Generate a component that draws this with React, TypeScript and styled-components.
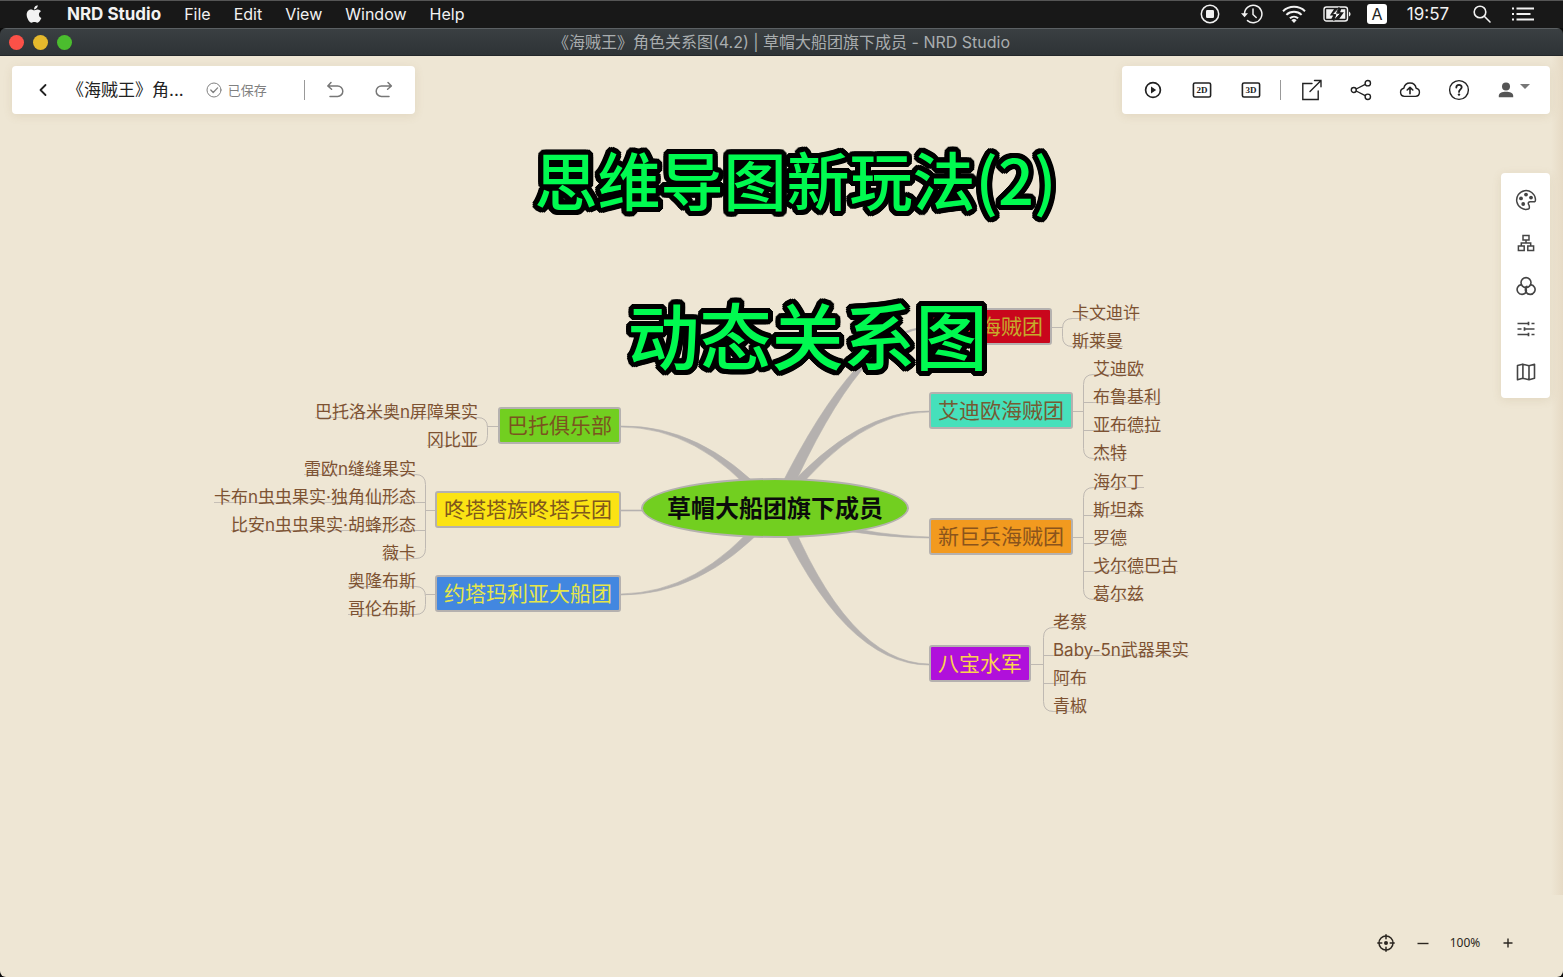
import React from "react";
import styled, { createGlobalStyle } from "styled-components";
import { FaApple } from "react-icons/fa";

const LINE = "#b5b1af";
const UI_FONT = `Inter, "Noto Sans CJK SC", sans-serif`;

const GlobalStyle = createGlobalStyle`
  *, *::before, *::after { box-sizing: border-box; }
  html { background: #fff; }
  body { margin: 0; font-family: ${UI_FONT}; }
  button { border: 0; padding: 0; background: none; font: inherit; color: inherit; cursor: pointer; }
  svg { display: block; }
`;

const Desktop = styled.div`
  display: flex;
  flex-direction: column;
  min-height: calc(100vh - 2px);
  margin: 0 2px 2px 0;
  background: #0c0c0c;
`;

/* ---------- system menu bar ---------- */

const MenuBar = styled.header`
  display: flex;
  align-items: center;
  justify-content: space-between;
  height: 28px;
  padding: 0 28px 2px 24px;
  border-top: 1px solid #555;
  background: #181818;
  color: #f2f2f2;
  font-size: 16px;
  line-height: 20px;
`;

const MenuGroup = styled.nav`
  display: flex;
  align-items: center;
  gap: 23px;
`;

const MenuItem = styled.button<{ $strong?: boolean }>`
  font-size: ${(p) => (p.$strong ? 17 : 16)}px;
  font-weight: ${(p) => (p.$strong ? 700 : 400)};
  white-space: nowrap;
`;

const StatusGroup = styled.div`
  display: flex;
  align-items: center;
  gap: 16px;
`;

const StatusItem = styled.div<{ $width: number }>`
  display: flex;
  justify-content: center;
  width: ${(p) => p.$width}px;
`;

const Clock = styled(StatusItem)`
  font-size: 17px;
`;

const InputBadge = styled.span`
  width: 20px;
  height: 20px;
  border-radius: 3px;
  background: #fff;
  color: #222;
  font-size: 16px;
  text-align: center;
`;

/* ---------- application window ---------- */

const Window = styled.div`
  display: flex;
  flex: 1;
  flex-direction: column;
  overflow: hidden;
  border-radius: 6px;
`;

const TitleBar = styled.div`
  display: grid;
  grid-template-columns: 1fr auto 1fr;
  align-items: center;
  height: 28px;
  padding: 0 9px;
  border-top: 1px solid #5b6063;
  border-bottom: 1px solid #23272a;
  background: linear-gradient(#3a3f42, #2e3336);
`;

const Lights = styled.div`
  display: flex;
  gap: 9px;
`;

const Light = styled.button<{ $color: string }>`
  width: 15px;
  height: 15px;
  border-radius: 50%;
  background: ${(p) => p.$color};
`;

const WindowTitle = styled.div`
  color: #a9adaf;
  font-size: 16px;
  line-height: 24px;
  white-space: nowrap;
`;

const Stage = styled.main`
  display: grid;
  flex: 1;
  grid-template: minmax(0, 1fr) / minmax(0, 1fr);
  background: #eee6d4;

  > * { grid-area: 1 / 1; }
`;

const Panel = styled.div`
  display: flex;
  border-radius: 4px;
  background: #fff;
  box-shadow: 0 2px 10px rgba(150, 120, 70, 0.14);
`;

const TopBars = styled.div`
  display: flex;
  align-items: flex-start;
  align-self: start;
  justify-content: space-between;
  padding: 10px 13px 0 12px;
`;

const Toolbar = styled(Panel)<{ $end?: number }>`
  align-items: center;
  height: 48px;
  padding: 0 ${(p) => p.$end ?? 0}px 0 6px;
`;

const ToolButton = styled.button<{ $tone?: string; $height?: number }>`
  display: flex;
  align-items: center;
  justify-content: center;
  width: 49px;
  height: ${(p) => p.$height ?? 48}px;
  color: ${(p) => p.$tone ?? "#222"};
`;

const UserButton = styled.button`
  display: flex;
  align-items: center;
  gap: 6px;
  height: 48px;
  padding: 0 20px 0 15px;
  color: #555;
`;

const Divider = styled.span`
  width: 1px;
  height: 20px;
  margin: 0 6px 0 5px;
  background: #999;
`;

const DocTitle = styled.div`
  color: #222;
  font-size: 17px;
  line-height: 24px;
  white-space: nowrap;
`;

const SaveState = styled.div`
  display: flex;
  align-items: center;
  gap: 6px;
  margin: 0 32px 0 22px;
  color: #808080;
  font-size: 13px;
  line-height: 20px;
  white-space: nowrap;
`;

const SideRail = styled(Panel)`
  flex-direction: column;
  align-self: start;
  justify-self: end;
  margin: 117px 13px 0 0;
  padding: 5px 0;
`;

const DrawerEdge = styled.div`
  justify-self: end;
  width: 12px;
  margin-bottom: 82px;
  background: linear-gradient(90deg, rgba(205, 180, 150, 0), rgba(205, 180, 150, 0.24));
`;

const ZoomBar = styled.div`
  display: flex;
  align-items: center;
  align-self: end;
  justify-self: end;
  margin: 0 37px 22px 0;
  color: #2b2620;
  font-family: "Noto Sans", sans-serif;
  font-size: 12px;
  line-height: 24px;
`;

const ZoomButton = styled.button`
  display: flex;
  align-items: center;
  justify-content: center;
  width: 37px;
  height: 24px;
`;

const ZoomValue = styled.output`
  width: 48px;
  text-align: center;
`;

/* ---------- mind map ---------- */

const MapPlane = styled.div`
  position: relative;
  place-self: center;
  width: 1201px;
  height: 721px;
`;

const Links = styled.svg`
  position: absolute;
  inset: 0;
`;

const RootNode = styled.div`
  position: absolute;
  left: 460px;
  top: 322px;
  display: flex;
  align-items: center;
  justify-content: center;
  width: 268px;
  height: 60px;
  padding-bottom: 4px;
  border: 2px solid ${LINE};
  border-radius: 50%;
  background: #72cf20;
  color: #0b0b0b;
  font-size: 24px;
  font-weight: 700;
  white-space: nowrap;
`;

type Side = "left" | "right";

const BranchNode = styled.div<{ $side: Side; $x: number; $y: number; $fill: string; $ink: string }>`
  position: absolute;
  ${(p) => (p.$side === "right" ? "left" : "right")}: ${(p) => p.$x}px;
  top: ${(p) => p.$y - 19}px;
  padding: 0 7px;
  border: 2px solid ${LINE};
  border-radius: 3px;
  background: ${(p) => p.$fill};
  color: ${(p) => p.$ink};
  font-size: 21px;
  line-height: 33px;
  white-space: nowrap;
`;

const LeafList = styled.ul<{ $side: Side; $x: number; $y: number }>`
  position: absolute;
  ${(p) => (p.$side === "right" ? "left" : "right")}: ${(p) => p.$x}px;
  top: ${(p) => p.$y - 20}px;
  display: flex;
  flex-direction: column;
  align-items: ${(p) => (p.$side === "right" ? "flex-start" : "flex-end")};
  margin: 0;
  padding: 0;
  list-style: none;
`;

const Leaf = styled.li`
  height: 28px;
  background: linear-gradient(#c6bfb6, #c6bfb6) 0 20px / 100% 1px no-repeat;
  color: #7d5232;
  font-size: 17px;
  line-height: 30px;
  white-space: nowrap;
`;

/* black rim: the glyphs repeated on a small circle behind the green fill */
const RIM = [
  [5, 0], [5, 2], [4, 3], [3, 4], [2, 5], [0, 5], [-2, 5], [-3, 4], [-4, 3], [-5, 2],
  [-5, 0], [-5, -2], [-4, -3], [-3, -4], [-2, -5], [0, -5], [2, -5], [3, -4], [4, -3], [5, -2],
  [3, 0], [0, 3], [-3, 0], [0, -3],
]
  .map(([x, y]) => `${x}px ${y}px 0 #000`)
  .join(", ");

const Captions = styled.div`
  z-index: 1;
  display: flex;
  flex-direction: column;
  align-items: center;
  align-self: start;
  gap: 75px;
  padding-top: 82px;
  pointer-events: none;
`;

const Caption = styled.p<{ $size: number; $indent: number }>`
  margin: 0;
  padding-left: ${(p) => p.$indent}px;
  color: #00fa50;
  font-family: "Noto Sans CJK SC", sans-serif;
  font-size: ${(p) => p.$size}px;
  font-weight: 500;
  line-height: 80px;
  white-space: nowrap;
  text-shadow: ${RIM};
`;

interface Branch {
  label: string;
  side: Side;
  /* vertical middle of the branch box */
  y: number;
  fill: string;
  ink: string;
  /* outer edge of the box, bracket position and first underline */
  edge: number;
  spine: number;
  first: number;
  leaves: string[];
  /* start and control point of the tapered link from the root */
  from?: [number, number];
  bend?: [number, number];
  thick?: number;
}

const PLANE_WIDTH = 1201;
const LEFT_EDGE = 440;
const RIGHT_EDGE = 748;

const branches: Branch[] = [
  { label: "美丽海贼团", side: "right", y: 171, fill: "#c9061c", ink: "#c6a92c", edge: 871, spine: 881, first: 162, leaves: ["卡文迪许", "斯莱曼"], from: [602, 339], bend: [681, 171], thick: 12 },
  { label: "艾迪欧海贼团", side: "right", y: 255, fill: "#46e0bb", ink: "#765a33", edge: 892, spine: 902, first: 218, leaves: ["艾迪欧", "布鲁基利", "亚布德拉", "杰特"], from: [606, 339], bend: [677, 255], thick: 9 },
  { label: "新巨兵海贼团", side: "right", y: 381, fill: "#f29a1f", ink: "#8a541c", edge: 892, spine: 902, first: 331, leaves: ["海尔丁", "斯坦森", "罗德", "戈尔德巴古", "葛尔兹"], from: [640, 368], bend: [700, 381], thick: 5 },
  { label: "八宝水军", side: "right", y: 508, fill: "#b010db", ink: "#fbd34e", edge: 850, spine: 862, first: 471, leaves: ["老蔡", "Baby-5n武器果实", "阿布", "青椒"], from: [597, 349], bend: [664, 508], thick: 12 },
  { label: "巴托俱乐部", side: "left", y: 270, fill: "#72cf20", ink: "#7a541f", edge: 317, spine: 306, first: 261, leaves: ["巴托洛米奥n屏障果实", "冈比亚"], from: [584, 344], bend: [519, 270], thick: 9 },
  { label: "咚塔塔族咚塔兵团", side: "left", y: 354, fill: "#fbe314", ink: "#80581c", edge: 254, spine: 244, first: 318, leaves: ["雷欧n缝缝果实", "卡布n虫虫果实·独角仙形态", "比安n虫虫果实·胡蜂形态", "薇卡"] },
  { label: "约塔玛利亚大船团", side: "left", y: 438, fill: "#4287e0", ink: "#e6e64a", edge: 254, spine: 244, first: 430, leaves: ["奥隆布斯", "哥伦布斯"], from: [584, 364], bend: [519, 438], thick: 9 },
];

/* a quadratic curve that narrows from the root to the branch box */
function taperedPath(b: Branch): string {
  const end = b.side === "right" ? RIGHT_EDGE : LEFT_EDGE;
  if (!b.from || !b.bend) return `M${end} ${b.y}H462V${b.y + 1}H${end}Z`;
  const [sx, sy] = b.from;
  const [cx, cy] = b.bend;
  const half = (b.thick ?? 10) / 2;
  const length = Math.hypot(cx - sx, cy - sy);
  const nx = -(cy - sy) / length;
  const ny = (cx - sx) / length;
  const tip = b.side === "right" ? 1 : 0;
  const mid = half * 0.4;
  return [
    `M${sx + nx * half} ${sy + ny * half}`,
    `Q${cx + nx * mid} ${cy + ny * mid} ${end} ${b.y + tip}`,
    `V${b.y + 1 - tip}`,
    `Q${cx - nx * mid} ${cy - ny * mid} ${sx - nx * half} ${sy - ny * half}Z`,
  ].join("");
}

/* the bracket that joins a branch box with its leaves */
function bracketPath(b: Branch): string {
  const dir = b.side === "right" ? 10 : -10;
  const top = b.first + 0.5;
  const bottom = top + 28 * (b.leaves.length - 1);
  const x = b.spine + 0.5;
  const inner = b.leaves
    .slice(1, -1)
    .map((_, i) => `M${x} ${top + 28 * (i + 1)}h${dir}`)
    .join("");
  return (
    `M${b.edge} ${b.y + 0.5}H${x}` +
    `M${x + dir} ${top}Q${x} ${top} ${x} ${top + 10}V${bottom - 10}Q${x} ${bottom} ${x + dir} ${bottom}` +
    inner
  );
}

/* ---------- icons ---------- */

interface IconProps {
  w?: number;
  h?: number;
  sw?: number;
  children: React.ReactNode;
}

const Icon = ({ w = 20, h = 20, sw = 1.4, children }: IconProps) => (
  <svg width={w} height={h} viewBox={`0 0 ${w} ${h}`} fill="none" stroke="currentColor" strokeWidth={sw} strokeLinecap="round" strokeLinejoin="round" aria-hidden="true">
    {children}
  </svg>
);

const RecordIcon = () => (
  <Icon sw={1.5}>
    <circle cx="10" cy="10" r="8.7" />
    <rect x="6" y="6" width="8" height="8" rx="1.2" fill="currentColor" stroke="none" />
  </Icon>
);
const HistoryIcon = () => (
  <Icon w={24} h={20} sw={1.5}>
    <path d="M4.5 10a8.7 8.7 0 1 1 3 6.6" />
    <path d="M1 9.2h7L4.5 13.2z" fill="currentColor" stroke="none" />
    <path d="M13 5v5.5l3.2 3" />
  </Icon>
);
const WifiIcon = () => (
  <Icon w={26} h={20} sw={2}>
    <path d="M2 7.2a16 16 0 0 1 22 0M5.4 10.9a11 11 0 0 1 15.2 0M8.9 14.3a6 6 0 0 1 8.2 0" strokeLinecap="butt" />
    <path d="M13 19l-2.6-2.8a3.8 3.8 0 0 1 5.2 0z" fill="currentColor" stroke="none" />
  </Icon>
);
const BatteryIcon = () => (
  <Icon w={28} h={18} sw={1.4}>
    <rect x="1" y="2" width="23.5" height="14" rx="2.5" />
    <path d="M26 6.5q1.6 1 1.6 2.5T26 11.5z" fill="currentColor" stroke="none" />
    <path d="M3.2 4.2h7.8L6.8 10.6h3.4L8.4 13.8H3.2zM22.3 4.2h-4.1l-1.1 3h3.8l-4.6 6.6h6z" fill="currentColor" stroke="none" />
    <path d="M15.8 2.6L9 9.6h3.8l-2 6 7-7.4h-3.8z" fill="currentColor" stroke="#181818" strokeWidth="1" />
  </Icon>
);
const SearchIcon = () => (
  <Icon w={18} h={18} sw={1.6}>
    <circle cx="7" cy="7" r="5.8" />
    <path d="M11.300 11.300l5.700 5.700" />
  </Icon>
);
const ListIcon = () => (
  <Icon w={24} h={16} sw={2}>
    <path d="M1 2.5h2M1 8h2M1 13.5h2M5.500 2.500h17.500M5.500 8h14M5.500 13.500h17.500" strokeLinecap="butt" />
  </Icon>
);
const BackIcon = () => (
  <Icon w={12} h={14} sw={1.8}>
    <path d="M8.5 2L3.5 7l5 5" />
  </Icon>
);
const SavedIcon = () => (
  <Icon w={16} h={16} sw={1}>
    <circle cx="8" cy="8" r="7" />
    <path d="M4.8 8l2.4 2.5 4.4-4.6" strokeWidth="1.3" />
  </Icon>
);
const UndoIcon = () => (
  <Icon w={18} h={18} sw={1.5}>
    <path d="M5 1.5L1.8 5 5.6 8.2M2 5h9.6a5 5 0 0 1 0 10.4H4" />
  </Icon>
);
const RedoIcon = () => (
  <Icon w={18} h={18} sw={1.5}>
    <path d="M13 1.5L16.4 5l-3.8 3.2M16.2 5H6.4a5 5 0 0 0 0 10.4H14" />
  </Icon>
);
const PlayIcon = () => (
  <Icon w={18} h={18} sw={1.7}>
    <circle cx="9" cy="9" r="7.4" />
    <path d="M7 5.6v6.8L12.2 9z" fill="currentColor" stroke="none" />
  </Icon>
);
const DimensionIcon = ({ text }: { text: string }) => (
  <Icon w={20} h={16} sw={1.6}>
    <rect x="1.4" y="1" width="17.2" height="14" rx="1.6" />
    <text x="10" y="11" textAnchor="middle" fontFamily="Liberation Serif, serif" fontWeight="700" fontSize="9" fill="currentColor" stroke="none">
      {text}
    </text>
  </Icon>
);
const OpenIcon = () => (
  <Icon w={22} h={22} sw={1.4}>
    <path d="M11 4.5H1.8v16h15.4V12M13.5 1.5H20v6.2M20 1.5L9 12.6" strokeLinejoin="miter" />
  </Icon>
);
const ShareIcon = () => (
  <Icon w={22} h={22} sw={1.4}>
    <circle cx="3.8" cy="11" r="2.5" />
    <circle cx="17.8" cy="4.2" r="2.7" />
    <circle cx="17.8" cy="17.8" r="2.7" />
    <path d="M6.2 10l9-4.6M6.2 12l9 4.6" />
  </Icon>
);
const CloudIcon = () => (
  <Icon w={22} h={18} sw={1.4}>
    <path d="M5.4 15.4a4.1 4.1 0 0 1-.6-8.1C5.400 4 8 2 11 2s5.600 2 6.200 5.300a4.100 4.100 0 0 1-.6 8.100z" />
    <path d="M11 12.800V6.600M8.200 9L11 6.300 13.800 9" strokeWidth="1.600" />
  </Icon>
);
const HelpIcon = () => (
  <Icon w={22} h={22} sw={1.4}>
    <circle cx="11" cy="11" r="9.4" />
    <path d="M8.300 8.600c0-3.600 5.400-3.400 5.400-.3 0 1.900-2.700 2.200-2.700 4.600" strokeWidth="1.800" />
    <circle cx="11" cy="15.600" r="1.200" fill="currentColor" stroke="none" />
  </Icon>
);
const UserIcon = () => (
  <Icon w={16} h={16}>
    <circle cx="8" cy="4.600" r="4" fill="currentColor" stroke="none" />
    <path d="M.8 15.200v-1.400C.8 11 4 9.800 8 9.800s7.200 1.200 7.200 4v1.400z" fill="currentColor" stroke="none" />
  </Icon>
);
const CaretIcon = () => (
  <Icon w={10} h={12}>
    <path d="M0 0h10L5 5z" fill="#777" stroke="none" />
  </Icon>
);
const PaletteIcon = () => (
  <Icon w={22} h={22} sw={1.5}>
    <path d="M13.400 20.100a9.400 9.400 0 1 1 7-10.200c.3 2.300-.3 2.900-2 2.900h-3.200c-1.800 0-2.400 1.400-1.500 2.900.8 1.300 1.200 3.900-.3 4.400z" />
    <g fill="currentColor" stroke="none">
      <circle cx="11" cy="5.600" r="1.900" />
      <circle cx="6" cy="9.400" r="1.900" />
      <circle cx="16" cy="8.600" r="1.900" />
      <circle cx="8.200" cy="15" r="1.900" />
    </g>
  </Icon>
);
const TreeIcon = () => (
  <Icon w={18} h={18} sw={1.5}>
    <path d="M6 1.500h6v4.600H6zM1.400 12h5.800v4.600H1.400zM10.800 12h5.800v4.600h-5.800zM9 6.100v2.900M4.300 12V9h9.400v3" strokeLinejoin="miter" />
  </Icon>
);
const CirclesIcon = () => (
  <Icon w={20} h={20} sw={1.600}>
    <circle cx="10" cy="6.600" r="5" />
    <path d="M5.300 8.600a4.900 4.900 0 1 0 4.800 7.600 6 6 0 0 0-.8-5" />
    <path d="M14.700 8.600a4.900 4.900 0 1 1-4.600 7.600 4.800 4.800 0 0 1 .8-5.800" />
  </Icon>
);
const SlidersIcon = () => (
  <Icon w={20} h={18} sw={1.700}>
    <path d="M1.500 3.500h11M15.500 3.500h3M1.500 9h4M8.500 9h10M1.500 14.500h11M15.500 14.500h3M12.500 1.800v3.400M8.500 7.300v3.400M12.500 12.800v3.400" strokeLinecap="butt" />
  </Icon>
);
const MapIcon = () => (
  <Icon w={20} h={18} sw={1.600}>
    <path d="M1.500 2.600l5.200-1.400 6.300 1.600 5.500-1.600v14l-5.500 1.600-6.300-1.600-5.200 1.600zM6.900 1.300v13.900M13 2.800v14" />
  </Icon>
);
const TargetIcon = () => (
  <Icon w={18} h={18} sw={1.500}>
    <circle cx="9" cy="9" r="7" />
    <circle cx="9" cy="9" r="2" fill="currentColor" stroke="none" />
    <path d="M9 .8v4M9 13.200v4M.8 9h4M13.200 9h4" />
  </Icon>
);
const MinusIcon = () => (
  <Icon w={12} h={12} sw={1.400}>
    <path d="M.5 6.500h11" strokeLinecap="butt" />
  </Icon>
);
const PlusIcon = () => (
  <Icon w={10} h={10} sw={1.400}>
    <path d="M5 .5v9M.5 5h9" strokeLinecap="butt" />
  </Icon>
);

/* ---------- page ---------- */

const menus = ["File", "Edit", "View", "Window", "Help"];

const railTools: [string, React.ReactNode][] = [
  ["主题", <PaletteIcon />],
  ["结构", <TreeIcon />],
  ["样式", <CirclesIcon />],
  ["设置", <SlidersIcon />],
  ["导航", <MapIcon />],
];

export default function App() {
  return (
    <Desktop>
      <GlobalStyle />
      <MenuBar>
        <MenuGroup>
          <MenuItem aria-label="Apple">
            <FaApple size={20} />
          </MenuItem>
          <MenuItem $strong>NRD Studio</MenuItem>
          {menus.map((m) => (
            <MenuItem key={m}>{m}</MenuItem>
          ))}
        </MenuGroup>
        <StatusGroup>
          <StatusItem $width={26}><RecordIcon /></StatusItem>
          <StatusItem $width={26}><HistoryIcon /></StatusItem>
          <StatusItem $width={26}><WifiIcon /></StatusItem>
          <StatusItem $width={28}><BatteryIcon /></StatusItem>
          <StatusItem $width={20}><InputBadge>A</InputBadge></StatusItem>
          <Clock $width={50}>19:57</Clock>
          <StatusItem $width={26}><SearchIcon /></StatusItem>
          <StatusItem $width={24}><ListIcon /></StatusItem>
        </StatusGroup>
      </MenuBar>

      <Window>
        <TitleBar>
          <Lights>
            <Light $color="#fc5148" aria-label="Close" />
            <Light $color="#e5b92c" aria-label="Minimize" />
            <Light $color="#4bbd2e" aria-label="Zoom" />
          </Lights>
          <WindowTitle>《海贼王》角色关系图(4.2) | 草帽大船团旗下成员 - NRD Studio</WindowTitle>
        </TitleBar>

        <Stage>
          <MapPlane>
            <Links width={PLANE_WIDTH} height={721} fill="none" aria-hidden="true">
              {branches.map((b) => (
                <g key={b.label}>
                  <path d={taperedPath(b)} fill={LINE} stroke={LINE} strokeWidth={0.6} />
                  <path d={bracketPath(b)} stroke="#bfb9b2" />
                </g>
              ))}
            </Links>
            <RootNode>草帽大船团旗下成员</RootNode>
            {branches.map((b) => {
              const right = b.side === "right";
              return (
                <React.Fragment key={b.label}>
                  <BranchNode
                    $side={b.side}
                    $x={right ? RIGHT_EDGE : PLANE_WIDTH - LEFT_EDGE}
                    $y={b.y}
                    $fill={b.fill}
                    $ink={b.ink}
                  >
                    {b.label}
                  </BranchNode>
                  <LeafList
                    $side={b.side}
                    $x={right ? b.spine + 10 : PLANE_WIDTH - b.spine + 9}
                    $y={b.first}
                  >
                    {b.leaves.map((leaf) => (
                      <Leaf key={leaf}>{leaf}</Leaf>
                    ))}
                  </LeafList>
                </React.Fragment>
              );
            })}
          </MapPlane>

          <Captions>
            <Caption $size={63} $indent={28}>思维导图新玩法(2)</Caption>
            <Caption $size={72} $indent={52}>动态关系图</Caption>
          </Captions>

          <DrawerEdge />

          <TopBars>
            <Toolbar $end={6}>
              <ToolButton aria-label="返回"><BackIcon /></ToolButton>
              <DocTitle>《海贼王》角...</DocTitle>
              <SaveState>
                <SavedIcon />
                已保存
              </SaveState>
              <Divider />
              <ToolButton $tone="#777" aria-label="撤销"><UndoIcon /></ToolButton>
              <ToolButton $tone="#777" aria-label="重做"><RedoIcon /></ToolButton>
            </Toolbar>
            <Toolbar>
              <ToolButton aria-label="播放"><PlayIcon /></ToolButton>
              <ToolButton aria-label="2D"><DimensionIcon text="2D" /></ToolButton>
              <ToolButton aria-label="3D"><DimensionIcon text="3D" /></ToolButton>
              <Divider />
              <ToolButton aria-label="打开"><OpenIcon /></ToolButton>
              <ToolButton aria-label="分享"><ShareIcon /></ToolButton>
              <ToolButton aria-label="上传"><CloudIcon /></ToolButton>
              <ToolButton aria-label="帮助"><HelpIcon /></ToolButton>
              <UserButton aria-label="用户">
                <UserIcon />
                <CaretIcon />
              </UserButton>
            </Toolbar>
          </TopBars>

          <SideRail>
            {railTools.map(([name, icon]) => (
              <ToolButton key={name} $tone="#444" $height={43} aria-label={name}>
                {icon}
              </ToolButton>
            ))}
          </SideRail>

          <ZoomBar>
            <ZoomButton aria-label="定位"><TargetIcon /></ZoomButton>
            <ZoomButton aria-label="缩小"><MinusIcon /></ZoomButton>
            <ZoomValue>100%</ZoomValue>
            <ZoomButton aria-label="放大"><PlusIcon /></ZoomButton>
          </ZoomBar>
        </Stage>
      </Window>
    </Desktop>
  );
}
